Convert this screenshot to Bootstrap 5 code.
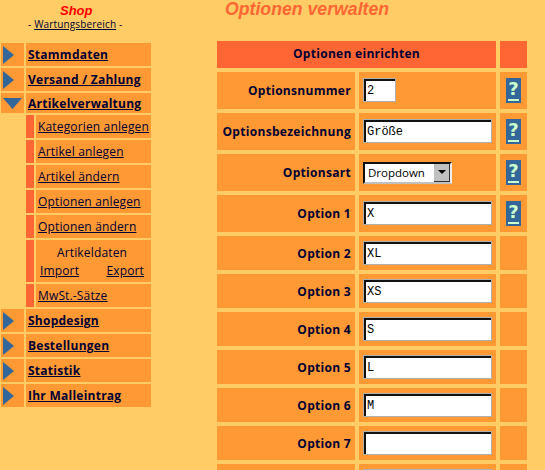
<!DOCTYPE html>
<html lang="de">
<head>
    <meta charset="UTF-8">
    <title>Optionen verwalten</title>
    <link rel="stylesheet" href="https://cdn.jsdelivr.net/npm/bootstrap@5.3.0/dist/css/bootstrap.min.css">
    <style>
        html, body { height: 470px; overflow: hidden; }
        body { background: #ffcc66; color: #000033; font-family: "Open Sans", "DejaVu Sans", sans-serif; font-size: 12px; line-height: 1.2; }
        a { color: #000033; }
        .seite { width: 545px; height: 470px; overflow: hidden; }
        .seitenleiste { width: 151px; flex: none; padding: 0 0 0 1px; }
        .kopf { height: 43px; padding-top: 3px; padding-left: 26px; }
        .shop-titel { font: italic bold 13px "Liberation Sans", Arial, sans-serif; color: #ff0000; line-height: 16px; padding-left: 33px; }
        .wartung { font-size: 10px; line-height: 11px; padding-left: 1px; letter-spacing: .15px; }
        .menu-liste { display: flex; flex-direction: column; gap: 2px; }
        .menu-zeile { display: flex; gap: 2px; height: 23px; }
        .menu-zeile.offen { height: 20px; }
        .pfeil-feld { width: 23px; flex: none; background: #ff9933; display: flex; align-items: center; padding-left: 2px; }
        .menu-text { flex: 1; background: #ff9933; font-size: 12px; font-weight: 700; letter-spacing: .25px; padding: 2px 0 0 2px; display: flex; align-items: center; }
        .unter-zeile { display: flex; gap: 2px; height: 23px; margin-left: 25px; }
        .unter-zeile.hoch { height: 42px; }
        .streifen { width: 8px; flex: none; background: #ff6633; }
        .unter-text { flex: 1; background: #ff9933; font-size: 12px; letter-spacing: .15px; padding: 2px 0 0 2px; display: flex; align-items: center; }
        .daten-block { flex: 1; background: #ff9933; font-size: 12px; letter-spacing: .15px; text-align: center; padding: 6px 7px 0 4px; }
        .hauptteil { width: 328px; margin-left: 66px; }
        .haupt-titel { font: italic bold 17.7px "Liberation Sans", Arial, sans-serif; color: #ff6633; height: 41px; margin: 0; padding: 0 0 0 8px; line-height: 18px; }
        .raster { display: grid; grid-template-columns: 138px 137px 27px; grid-template-rows: 27px repeat(4, 37px) repeat(7, 34px); gap: 4px; }
        .raster > div { background: #ff9933; }
        .raster > .kopfzelle { background: #ff6633; }
        .kopfbreit { grid-column: span 2; display: flex; align-items: center; justify-content: center; font-size: 12px; letter-spacing: .3px; font-weight: 700; }
        .beschriftung { display: flex; align-items: center; justify-content: flex-end; padding: 2px 4px 0 0; font-size: 12px; letter-spacing: .3px; font-weight: 700; }
        .eingabe { display: flex; align-items: center; padding-left: 4px; }
        .feld { height: 24px; width: 129px; margin-bottom: 1px; background: #fff; border: 1px solid #b0b0b0; box-shadow: inset 2px 2px 0 #111; padding: 2px 2px 0 3px; font: 12px "Liberation Mono", "Courier New", monospace; color: #000; border-radius: 0; }
        .feld.kurz { width: 33px; }
        .auswahl { height: 22px; width: 89px; background: #fff; border: 2px solid #111; border-right-color: #eee; border-bottom-color: #c0c0c0; display: flex; align-items: center; justify-content: space-between; font-size: 11.5px; color: #000; padding-left: 3px; }
        .auswahl-knopf { width: 16px; height: 18px; background: #c0c0c0; display: flex; align-items: center; justify-content: center; border-right: 1px solid #333; border-bottom: 1px solid #333; }
        .hilfe-feld { display: flex; align-items: center; justify-content: center; }
        .hilfe-icon { width: 15px; height: 25px; background: #336699; color: #ccffcc; font: bold 18px/21px "DejaVu Sans", sans-serif; text-align: center; position: relative; }
        .hilfe-icon::after { content: ""; position: absolute; left: 2px; right: 2px; bottom: 2px; height: 2px; background: #ccffcc; }
    </style>
</head>
<body>
    <div class="seite d-flex">
        <div class="seitenleiste">
            <div class="kopf">
                <div class="shop-titel">Shop</div>
                <div class="wartung">- <a href="#">Wartungsbereich</a> -</div>
            </div>
            <div class="menu-liste">
                <div class="menu-zeile">
                    <div class="pfeil-feld"><svg width="11" height="18" viewBox="0 0 11 18"><path d="M0 0 L11 9 L0 18Z" fill="#336699"/></svg></div>
                    <div class="menu-text"><a href="#">Stammdaten</a></div>
                </div>
                <div class="menu-zeile">
                    <div class="pfeil-feld"><svg width="11" height="18" viewBox="0 0 11 18"><path d="M0 0 L11 9 L0 18Z" fill="#336699"/></svg></div>
                    <div class="menu-text"><a href="#">Versand / Zahlung</a></div>
                </div>
                <div class="menu-zeile offen">
                    <div class="pfeil-feld"><svg width="19" height="11" viewBox="0 0 19 11"><path d="M0 0 L19 0 L9.5 11Z" fill="#336699"/></svg></div>
                    <div class="menu-text"><a href="#">Artikelverwaltung</a></div>
                </div>
                <div class="unter-zeile"><div class="streifen"></div><div class="unter-text"><a href="#">Kategorien anlegen</a></div></div>
                <div class="unter-zeile"><div class="streifen"></div><div class="unter-text"><a href="#">Artikel anlegen</a></div></div>
                <div class="unter-zeile"><div class="streifen"></div><div class="unter-text"><a href="#">Artikel ändern</a></div></div>
                <div class="unter-zeile"><div class="streifen"></div><div class="unter-text"><a href="#">Optionen anlegen</a></div></div>
                <div class="unter-zeile"><div class="streifen"></div><div class="unter-text"><a href="#">Optionen ändern</a></div></div>
                <div class="unter-zeile hoch"><div class="streifen"></div>
                    <div class="daten-block">
                        <div>Artikeldaten</div>
                        <div class="d-flex justify-content-between mt-1"><a href="#">Import</a><a href="#">Export</a></div>
                    </div>
                </div>
                <div class="unter-zeile"><div class="streifen"></div><div class="unter-text"><a href="#">MwSt.-Sätze</a></div></div>
                <div class="menu-zeile">
                    <div class="pfeil-feld"><svg width="11" height="18" viewBox="0 0 11 18"><path d="M0 0 L11 9 L0 18Z" fill="#336699"/></svg></div>
                    <div class="menu-text"><a href="#">Shopdesign</a></div>
                </div>
                <div class="menu-zeile">
                    <div class="pfeil-feld"><svg width="11" height="18" viewBox="0 0 11 18"><path d="M0 0 L11 9 L0 18Z" fill="#336699"/></svg></div>
                    <div class="menu-text"><a href="#">Bestellungen</a></div>
                </div>
                <div class="menu-zeile">
                    <div class="pfeil-feld"><svg width="11" height="18" viewBox="0 0 11 18"><path d="M0 0 L11 9 L0 18Z" fill="#336699"/></svg></div>
                    <div class="menu-text"><a href="#">Statistik</a></div>
                </div>
                <div class="menu-zeile">
                    <div class="pfeil-feld"><svg width="11" height="18" viewBox="0 0 11 18"><path d="M0 0 L11 9 L0 18Z" fill="#336699"/></svg></div>
                    <div class="menu-text"><a href="#">Ihr Malleintrag</a></div>
                </div>
            </div>
        </div>
        <div class="hauptteil">
            <h1 class="haupt-titel">Optionen verwalten</h1>
            <div class="raster">
                <div class="kopfzelle kopfbreit">Optionen einrichten</div><div class="kopfzelle"></div>

                <div class="beschriftung">Optionsnummer</div>
                <div class="eingabe"><input class="feld kurz" type="text" value="2"></div>
                <div class="hilfe-feld"><div class="hilfe-icon">?</div></div>

                <div class="beschriftung">Optionsbezeichnung</div>
                <div class="eingabe"><input class="feld" type="text" value="Größe"></div>
                <div class="hilfe-feld"><div class="hilfe-icon">?</div></div>

                <div class="beschriftung">Optionsart</div>
                <div class="eingabe">
                    <div class="auswahl">Dropdown<span class="auswahl-knopf"><svg width="8" height="4" viewBox="0 0 8 4"><path d="M0 0H8L4 4Z" fill="#000"/></svg></span></div>
                </div>
                <div class="hilfe-feld"><div class="hilfe-icon">?</div></div>

                <div class="beschriftung">Option 1</div>
                <div class="eingabe"><input class="feld" type="text" value="X"></div>
                <div class="hilfe-feld"><div class="hilfe-icon">?</div></div>

                <div class="beschriftung">Option 2</div><div class="eingabe"><input class="feld" type="text" value="XL"></div><div></div>
                <div class="beschriftung">Option 3</div><div class="eingabe"><input class="feld" type="text" value="XS"></div><div></div>
                <div class="beschriftung">Option 4</div><div class="eingabe"><input class="feld" type="text" value="S"></div><div></div>
                <div class="beschriftung">Option 5</div><div class="eingabe"><input class="feld" type="text" value="L"></div><div></div>
                <div class="beschriftung">Option 6</div><div class="eingabe"><input class="feld" type="text" value="M"></div><div></div>
                <div class="beschriftung">Option 7</div><div class="eingabe"><input class="feld" type="text" value=""></div><div></div>
                <div></div><div class="eingabe"><input class="feld" type="text" value=""></div><div></div>
            </div>
        </div>
    </div>
    <script src="https://cdn.jsdelivr.net/npm/bootstrap@5.3.0/dist/js/bootstrap.bundle.min.js"></script>
</body>
</html>
